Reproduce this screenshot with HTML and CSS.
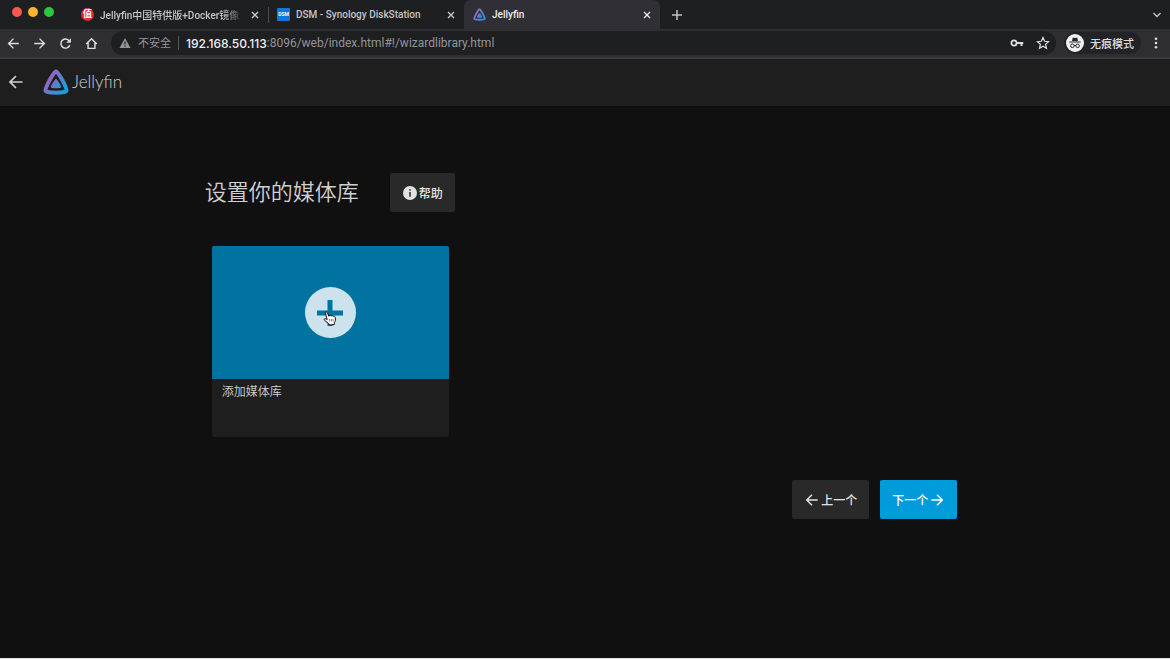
FILE: index.html
```html
<!DOCTYPE html>
<html lang="zh-CN">
<head>
    <meta charset="UTF-8">
    <meta name="viewport" content="width=device-width, initial-scale=1.0">
    <title>Jellyfin</title>
    <link rel="stylesheet" href="styles.css">
</head>
<body>

    <!-- Shared gradient and logo -->
    <svg class="defs" aria-hidden="true">
        <defs>
            <linearGradient id="jellyGradient" x1="10%" y1="30%" x2="90%" y2="85%">
                <stop offset="0" stop-color="#9a62c0"/>
                <stop offset="1" stop-color="#1c9cdc"/>
            </linearGradient>
            <symbol id="jellyfin" viewBox="0 0 26 26">
                <path d="M13 2.4C15.2 2.4 24.4 19.6 23.4 21.9C22.4 24.2 3.6 24.2 2.6 21.9C1.6 19.6 10.8 2.4 13 2.4Z" fill="none" stroke="url(#jellyGradient)" stroke-width="4" stroke-linejoin="round"/>
                <path d="M13 10C14.2 10 18.7 17.4 18.2 18.5C17.7 19.6 8.3 19.6 7.8 18.5C7.3 17.4 11.8 10 13 10Z" fill="url(#jellyGradient)"/>
            </symbol>
            <symbol id="close" viewBox="0 0 10 10">
                <path d="M2 2L8 8M8 2L2 8" fill="none" stroke="currentColor" stroke-width="1.4"/>
            </symbol>
            <symbol id="arrow" viewBox="0 0 16 16">
                <path d="M14.5 8H2M8 2L2 8L8 14" fill="none" stroke="currentColor" stroke-width="1.7"/>
            </symbol>
        </defs>
    </svg>

    <div class="tabs">
        <div class="lights">
            <span class="light red"></span>
            <span class="light yellow"></span>
            <span class="light green"></span>
        </div>
        <div class="tab">
            <span class="favicon smzdm">值</span>
            <span class="tab-title fade">Jellyfin中国特供版+Docker镜像</span>
            <button class="tab-close" aria-label="关闭"><svg><use href="#close"/></svg></button>
        </div>
        <div class="tab divided">
            <span class="favicon dsm">DSM</span>
            <span class="tab-title">DSM - Synology DiskStation</span>
            <button class="tab-close" aria-label="关闭"><svg><use href="#close"/></svg></button>
        </div>
        <div class="tab active">
            <svg class="favicon"><use href="#jellyfin"/></svg>
            <span class="tab-title">Jellyfin</span>
            <button class="tab-close" aria-label="关闭"><svg><use href="#close"/></svg></button>
        </div>
        <button class="new-tab" aria-label="新标签页">
            <svg viewBox="0 0 12 12"><path d="M6 1V11M1 6H11" stroke="currentColor" stroke-width="1.5"/></svg>
        </button>
        <button class="tab-search" aria-label="搜索标签页">
            <svg viewBox="0 0 10 10"><path d="M1.5 3L5 6.5L8.5 3" fill="none" stroke="currentColor" stroke-width="1.4"/></svg>
        </button>
    </div>

    <div class="toolbar">
        <button class="nav" aria-label="后退"><svg><use href="#arrow"/></svg></button>
        <button class="nav" aria-label="前进"><svg class="flip"><use href="#arrow"/></svg></button>
        <button class="nav" aria-label="重新加载">
            <svg viewBox="0 0 16 16"><path d="M13.2 10A5.6 5.6 0 1 1 12 4.2L13.5 5.8" fill="none" stroke="currentColor" stroke-width="1.8"/><path d="M14.6 1.5V7.2H8.9Z" fill="currentColor"/></svg>
        </button>
        <button class="nav" aria-label="主页">
            <svg viewBox="0 0 16 16"><path d="M1.5 8.5L8 2.2L14.5 8.5M3.8 7V14H12.2V7" fill="none" stroke="currentColor" stroke-width="1.8"/></svg>
        </button>
        <div class="address">
            <svg class="warning" viewBox="0 0 12 12"><path d="M6 1L11.5 11H.5Z" fill="currentColor"/><path d="M6 4.5V7.7M6 8.6V9.8" stroke="#1e1f21" stroke-width="1.1"/></svg>
            <span class="insecure">不安全</span>
            <label class="host" for="url">192.168.50.113</label>
            <input type="text" id="url" value=":8096/web/index.html#!/wizardlibrary.html">
            <button class="address-btn" aria-label="密码">
                <svg viewBox="0 0 14 14"><circle cx="4" cy="7" r="2.6" fill="none" stroke="currentColor" stroke-width="1.8"/><path d="M6.5 7H13.3M11.5 7V10" fill="none" stroke="currentColor" stroke-width="2"/></svg>
            </button>
            <button class="address-btn" aria-label="收藏">
                <svg viewBox="0 0 14 14"><path d="M7 1.6L8.6 5.3L12.6 5.7L9.6 8.3L10.5 12.3L7 10.2L3.5 12.3L4.4 8.3L1.4 5.7L5.4 5.3Z" fill="none" stroke="currentColor" stroke-width="1.2"/></svg>
            </button>
        </div>
        <button class="incognito">
            <svg viewBox="0 0 18 18"><circle cx="9" cy="9" r="9" fill="#f1f1f2"/><path d="M6 7L6.8 3.6L9 4L11.2 3.6L12 7Z" fill="#242528"/><path d="M3.3 8H14.7" stroke="#242528" stroke-width="1"/><circle cx="6.4" cy="11.8" r="1.8" fill="none" stroke="#242528"/><circle cx="11.6" cy="11.8" r="1.8" fill="none" stroke="#242528"/><path d="M8.2 11.5H9.8" stroke="#242528"/></svg>
            无痕模式
        </button>
        <button class="menu" aria-label="菜单">
            <svg viewBox="0 0 12 12"><circle cx="6" cy="1.7" r="1.3"/><circle cx="6" cy="6" r="1.3"/><circle cx="6" cy="10.3" r="1.3"/></svg>
        </button>
    </div>

    <header class="header">
        <button class="back" aria-label="返回"><svg><use href="#arrow"/></svg></button>
        <a class="logo" href="#"><svg><use href="#jellyfin"/></svg>Jellyfin</a>
    </header>

    <main class="wizard">
        <div class="title-row">
            <h1>设置你的媒体库</h1>
            <a class="btn" href="#">
                <svg viewBox="0 0 16 16"><circle cx="8" cy="8" r="8" fill="currentColor"/><path d="M8 3.6V5.3M8 6.8V12.2" stroke="#292929" stroke-width="1.7"/></svg>帮助
            </a>
        </div>

        <button class="card">
            <span class="card-image">
                <span class="add">
                    <svg viewBox="0 0 26 26"><path d="M13 0V26M0 13H26" stroke="#0073a0" stroke-width="5"/></svg>
                    <svg class="pointer" viewBox="0 0 14 16"><path d="M4.2 9.5L2.4 3.2C2 1.6 3.7 1.1 4.3 2.6L5.8 6.2C6.4 5.2 7.7 5.3 8 6.1C8.7 5.4 9.7 5.5 10.1 6.4C11 5.8 12 6.2 12.2 7.3C12.8 9.9 12.3 11.4 11.3 12.6L11.3 14.6L6.2 15L5.8 13.7L1.6 10.4C.5 9.4 1.6 8.2 2.8 8.8Z" fill="#fff" stroke="#111" stroke-width="1"/><path d="M6.6 9V11.5M8.4 9V11.5M10.1 9V11.5" stroke="#333" stroke-width=".6"/></svg>
                </span>
            </span>
            <span class="card-text">添加媒体库</span>
        </button>

        <div class="wizard-nav">
            <button class="btn"><svg><use href="#arrow"/></svg>上一个</button>
            <button class="btn primary">下一个<svg class="flip"><use href="#arrow"/></svg></button>
        </div>
    </main>

</body>
</html>
```

FILE: styles.css
```css
* {
    box-sizing: border-box;
}

body {
    display: flex;
    flex-direction: column;
    min-height: 100vh;
    margin: 0;
    background-color: #101010;
    border-bottom: 1px solid #e4e4e4;
    color: #d1d1d1;
    font-family: Inter, "Noto Sans CJK SC", sans-serif;
    font-size: 12px;
}

button {
    padding: 0;
    border: none;
    background: none;
    color: inherit;
    font: inherit;
    cursor: pointer;
}

a {
    color: inherit;
    text-decoration: none;
}

svg {
    display: block;
    flex: none;
}

.defs {
    position: absolute;
    width: 0;
    height: 0;
}

.flip {
    transform: scaleX(-1);
}

/* Browser tabs */
.tabs {
    display: flex;
    align-items: stretch;
    height: 29px;
    background-color: #1e1f21;
    color: #c4c5c8;
    font-family: Roboto, "Noto Sans CJK SC", sans-serif;
    font-size: 10px;
}

.lights {
    display: flex;
    gap: 6px;
    width: 72px;
    padding: 7px 0 0 12px;
}

.light {
    width: 10px;
    height: 10px;
    border-radius: 50%;
}

.red {
    background-color: #fc5753;
}

.yellow {
    background-color: #fdb32b;
}

.green {
    background-color: #2cc63f;
}

.tab {
    position: relative;
    display: flex;
    align-items: center;
    gap: 6px;
    width: 196px;
    padding: 0 8px 0 9px;
}

.divided::before {
    content: "";
    position: absolute;
    left: 0;
    top: 7px;
    width: 1px;
    height: 16px;
    background-color: #4a4b4e;
}

.active {
    background-color: #302f36;
    border-radius: 7px 7px 0 0;
    color: #ececee;
}

.favicon {
    flex: none;
    width: 13px;
    height: 13px;
    line-height: 13px;
    text-align: center;
    color: #fff;
}

.smzdm {
    border-radius: 50%;
    background-color: #e02b2b;
    font-size: 9px;
    font-weight: bold;
}

.dsm {
    border-radius: 1px;
    background-color: #0b78dd;
    font-size: 5px;
    font-weight: bold;
}

.tab-title {
    flex: 1;
    overflow: hidden;
    white-space: nowrap;
    font-weight: 500;
}

.fade {
    mask-image: linear-gradient(to right, #000 85%, transparent);
}

.tab-close svg,
.tab-search svg {
    width: 10px;
    height: 10px;
}

.new-tab {
    margin-left: 11px;
}

.new-tab svg {
    width: 12px;
    height: 12px;
}

.tab-search {
    margin-left: auto;
    padding-right: 8px;
}

/* Browser toolbar */
.toolbar {
    display: flex;
    align-items: center;
    height: 30px;
    padding: 0 8px 0 7px;
    background-color: #2e2e33;
    border-bottom: 2px solid #3b3b3d;
    color: #dedee0;
    font-size: 11px;
}

.nav {
    width: 26px;
}

.nav svg {
    width: 13px;
    height: 13px;
}

.address {
    display: flex;
    flex: 1;
    align-items: center;
    height: 24px;
    margin-right: 8px;
    padding: 0 6px 0 8px;
    border-radius: 12px;
    background-color: #1e1f21;
}

.warning {
    width: 12px;
    height: 12px;
    margin-right: 7px;
    color: #929396;
}

.insecure {
    padding-right: 7px;
    border-right: 1px solid #55565a;
    line-height: 14px;
    color: #939498;
}

.host {
    padding-left: 7px;
    color: #f0f0f2;
    font-size: 12px;
    font-weight: 500;
}

.address input {
    flex: 1;
    min-width: 0;
    padding: 0;
    border: none;
    outline: none;
    background: none;
    color: #939498;
    font-family: Roboto, sans-serif;
    font-size: 12px;
}

.address-btn {
    margin-left: 12px;
}

.address-btn svg {
    width: 14px;
    height: 14px;
}

.incognito {
    display: flex;
    align-items: center;
    gap: 6px;
    height: 22px;
    padding: 0 7px 0 2px;
    border-radius: 11px;
    background-color: #222326;
    font-weight: 500;
}

.incognito svg {
    width: 18px;
    height: 18px;
}

.menu {
    margin-left: 9px;
}

.menu svg {
    width: 12px;
    height: 12px;
    fill: currentColor;
}

/* Jellyfin header */
.header {
    display: flex;
    align-items: center;
    gap: 19px;
    height: 47px;
    padding: 0 8px 2px;
    background-color: #1e1e1e;
}

.back svg {
    width: 16px;
    height: 16px;
}

.logo {
    display: flex;
    align-items: center;
    gap: 3px;
    font-family: Lato, sans-serif;
    font-size: 17px;
    font-weight: 300;
}

.logo svg {
    width: 26px;
    height: 26px;
}

/* Wizard */
.wizard {
    width: 65%;
    margin: 0 auto;
    padding-top: 67px;
}

.title-row {
    display: flex;
    align-items: center;
    gap: 31px;
}

h1 {
    margin: 0;
    padding-bottom: 2px;
    font-size: 22px;
    font-weight: 350;
    line-height: 32px;
}

.btn {
    display: flex;
    align-items: center;
    gap: 1px;
    height: 39px;
    padding: 0 12px;
    border-radius: 2px;
    background-color: #292929;
    color: #e2e2e2;
    font-weight: 500;
}

.btn svg {
    width: 16px;
    height: 16px;
    padding: 1px;
}

.card {
    display: block;
    width: 237px;
    margin: 34px 0 0 7px;
    border-radius: 2px;
    background-color: #1e1e1e;
    overflow: hidden;
    text-align: left;
}

.card-image {
    display: flex;
    align-items: center;
    justify-content: center;
    aspect-ratio: 16 / 9;
    background-color: #0073a0;
}

.add {
    position: relative;
    display: flex;
    align-items: center;
    justify-content: center;
    width: 51px;
    height: 51px;
    border-radius: 50%;
    background-color: #cce3ed;
}

.add svg {
    width: 26px;
    height: 26px;
}

/* Hand cursor over the plus */
.add .pointer {
    position: absolute;
    left: 18px;
    top: 23px;
    width: 14px;
    height: 16px;
}

.card-text {
    display: block;
    height: 58px;
    padding: 4px 10px;
    line-height: 18px;
    font-weight: 350;
}

.wizard-nav {
    display: flex;
    justify-content: flex-end;
    gap: 11px;
    margin: 43px 8px 0 0;
}

.primary {
    background-color: #009bdb;
    color: #fff;
}
```
